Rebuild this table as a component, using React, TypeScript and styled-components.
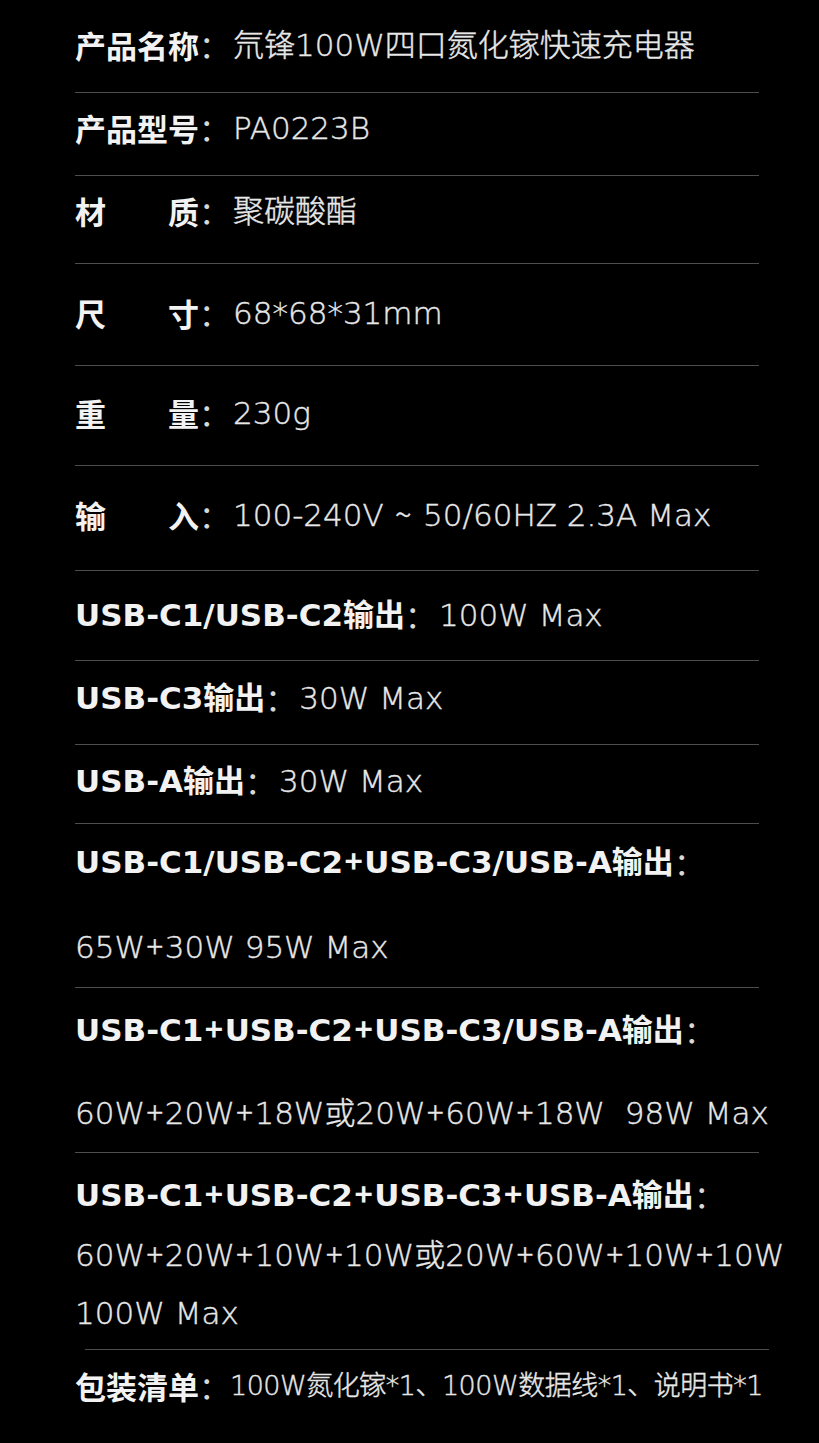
import * as React from "react";
import styled, { createGlobalStyle } from "styled-components";

const GlobalStyle = createGlobalStyle`
  html, body {
    margin: 0;
    padding: 0;
    background: #000;
  }
`;

// "+" and "~" are narrow in the source font, so they get their own span
const T = ({ children }: { children: string }) => (
  <>
    {children.split(/([+~])/).map((part, i) =>
      part === "+" || part === "~" ? <Sym key={i}>{part}</Sym> : part
    )}
  </>
);

export default function App() {
  return (
    <>
      <GlobalStyle />
      <Page>
        <Row $pt={25} $pb={27}>
          <Label>产品名称</Label>
          <Colon>：</Colon>
          <Value>氘锋100W四口氮化镓快速充电器</Value>
        </Row>
        <Divider />
        <Row $pt={15} $pb={27}>
          <Label>产品型号</Label>
          <Colon>：</Colon>
          <Value>PA0223B</Value>
        </Row>
        <Divider />
        <Row $pt={15} $pb={32}>
          <Label>材质</Label>
          <Colon>：</Colon>
          <Value>聚碳酸酯</Value>
        </Row>
        <Divider />
        <Row $pt={29} $pb={32}>
          <Label>尺寸</Label>
          <Colon>：</Colon>
          <Value>68*68*31mm</Value>
        </Row>
        <Divider />
        <Row $pt={27} $pb={32}>
          <Label>重量</Label>
          <Colon>：</Colon>
          <Value>230g</Value>
        </Row>
        <Divider />
        <Row $pt={29} $pb={35}>
          <Label>输入</Label>
          <Colon>：</Colon>
          <Value>
            <T>100-240V ~ 50/60HZ 2.3A Max</T>
          </Value>
        </Row>
        <Divider />
        <Row $pt={24} $pb={25}>
          <PortLabel>USB-C1/USB-C2输出</PortLabel>
          <Colon>：</Colon>
          <Value>100W Max</Value>
        </Row>
        <Divider />
        <Row $pt={17} $pb={26}>
          <PortLabel>USB-C3输出</PortLabel>
          <Colon>：</Colon>
          <Value>30W Max</Value>
        </Row>
        <Divider />
        <Row $pt={16} $pb={22}>
          <PortLabel>USB-A输出</PortLabel>
          <Colon>：</Colon>
          <Value>30W Max</Value>
        </Row>
        <Divider />
        <Block $pt={18} $pb={20} $gap={45}>
          <Title>
            <PortLabel>
              <T>USB-C1/USB-C2+USB-C3/USB-A输出</T>
            </PortLabel>
            <Colon>：</Colon>
          </Title>
          <Value>
            <T>65W+30W 95W Max</T>
          </Value>
        </Block>
        <Divider />
        <Block $pt={22} $pb={19} $gap={43}>
          <Title>
            <PortLabel>
              <T>USB-C1+USB-C2+USB-C3/USB-A输出</T>
            </PortLabel>
            <Colon>：</Colon>
          </Title>
          <Value>
            <T>{"60W+20W+18W或20W+60W+18W\u00a0\u00a098W Max"}</T>
          </Value>
        </Block>
        <Divider />
        <Block $pt={22} $pb={7} $gap={11}>
          <Title>
            <PortLabel>
              <T>USB-C1+USB-C2+USB-C3+USB-A输出</T>
            </PortLabel>
            <Colon>：</Colon>
          </Title>
          <WrapValue>
            <span>
              <T>60W+20W+10W+10W或20W+60W+10W+10W</T>
            </span>
            <span>100W Max</span>
          </WrapValue>
        </Block>
        <Divider $shift={10} />
        <Row $pt={16} $pb={40}>
          <Label>包装清单</Label>
          <Colon>：</Colon>
          <Value $small>100W氮化镓*1、100W数据线*1、说明书*1</Value>
        </Row>
      </Page>
    </>
  );
}

const Page = styled.div`
  width: 819px;
  min-height: 1443px;
  background: #000;
  padding: 0 60px 0 75px;
  box-sizing: border-box;
  font-family: "DejaVu Sans", "Noto Sans CJK SC", sans-serif;
  font-size: 31px;
  color: #ececec;
`;

const Row = styled.div<{ $pt: number; $pb: number }>`
  display: flex;
  align-items: center;
  white-space: nowrap;
  line-height: 40px;
  padding: ${(p) => p.$pt}px 0 ${(p) => p.$pb}px;
`;

const Block = styled.div<{ $pt: number; $pb: number; $gap: number }>`
  display: flex;
  flex-direction: column;
  gap: ${(p) => p.$gap}px;
  white-space: nowrap;
  line-height: 40px;
  padding: ${(p) => p.$pt}px 0 ${(p) => p.$pb}px;
`;

const Title = styled.div`
  display: flex;
  align-items: center;
`;

const Label = styled.span`
  display: inline-block;
  width: 124px;
  text-align: justify;
  text-align-last: justify;
  font-family: "Noto Sans CJK SC", sans-serif;
  font-weight: 700;
  color: #f2f2f2;
`;

const PortLabel = styled.span`
  font-family: "DejaVu Sans", "Noto Sans CJK SC", sans-serif;
  font-weight: 700;
  color: #f2f2f2;
`;

const Sym = styled.span`
  font-family: "Noto Sans CJK SC", sans-serif;
  line-height: 0;
  margin: 0 1.5px;
`;

const Colon = styled.span`
  font-family: "Noto Sans CJK SC", sans-serif;
  font-weight: 400;
  width: 34px;
  color: #d8d8d8;
`;

const Value = styled.span<{ $small?: boolean }>`
  font-weight: 300;
  font-size: ${(p) => (p.$small ? "27px" : "inherit")};
  letter-spacing: ${(p) => (p.$small ? "-0.5px" : "normal")};
  -webkit-text-stroke: 0.4px currentColor;
  color: #e8e8e8;
`;

const WrapValue = styled.div`
  display: flex;
  flex-direction: column;
  font-weight: 300;
  line-height: 58px;
  -webkit-text-stroke: 0.4px currentColor;
  color: #e8e8e8;
`;

const Divider = styled.div<{ $shift?: number }>`
  height: 1px;
  background: #4d4d4d;
  margin-left: ${(p) => p.$shift ?? 0}px;
  margin-right: ${(p) => -(p.$shift ?? 0)}px;
`;
